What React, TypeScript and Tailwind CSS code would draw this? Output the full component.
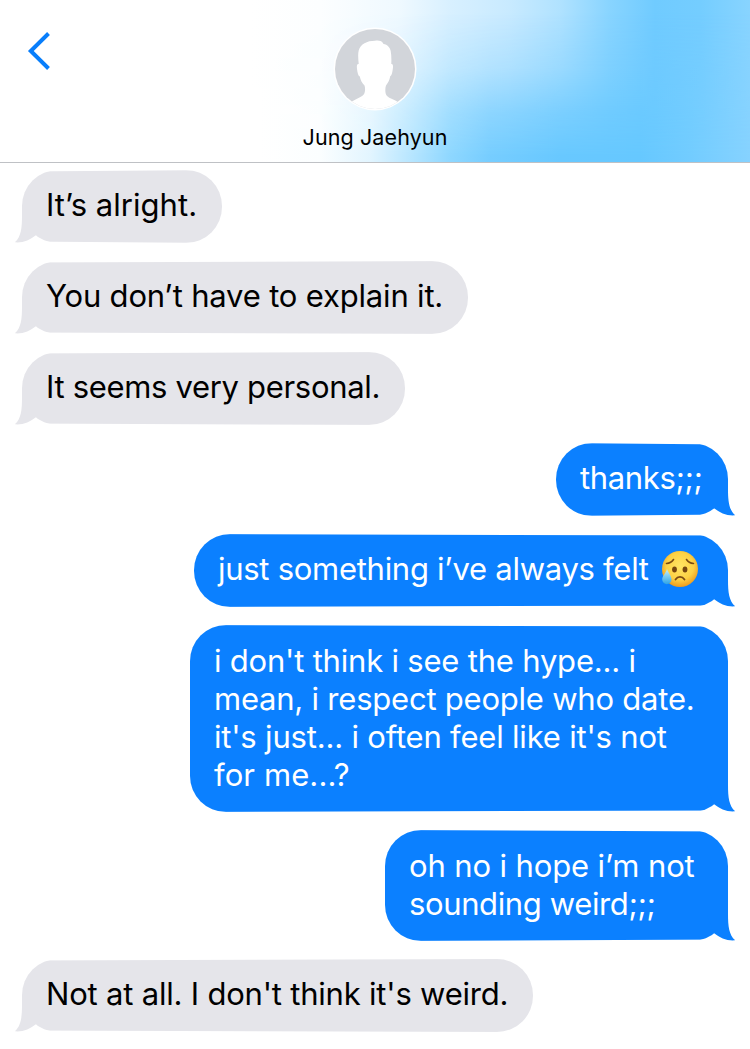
import { clsx } from 'clsx';

type Line = { text: string; tracking: string };

type Message = {
  id: number;
  sent: boolean;
  width: string;
  lines: Line[];
  emoji?: boolean;
};

const messages: Message[] = [
  { id: 1, sent: false, width: 'w-[200px]', lines: [{ text: 'It’s alright.', tracking: 'tracking-[0.03px]' }] },
  { id: 2, sent: false, width: 'w-[446px]', lines: [{ text: 'You don’t have to explain it.', tracking: 'tracking-[-0.18px]' }] },
  { id: 3, sent: false, width: 'w-[383px]', lines: [{ text: 'It seems very personal.', tracking: 'tracking-[-0.32px]' }] },
  { id: 4, sent: true, width: 'w-[172px]', lines: [{ text: 'thanks;;;', tracking: 'tracking-[-0.35px]' }] },
  {
    id: 5,
    sent: true,
    width: 'w-[534px]',
    lines: [{ text: 'just something i’ve always felt', tracking: 'tracking-[-0.28px]' }],
    emoji: true,
  },
  {
    id: 6,
    sent: true,
    width: 'w-[538px]',
    lines: [
      { text: "i don't think i see the hype... i", tracking: 'tracking-[-0.2px]' },
      { text: 'mean, i respect people who date.', tracking: 'tracking-[-0.22px]' },
      { text: "it's just... i often feel like it's not", tracking: 'tracking-[-0.19px]' },
      { text: 'for me...?', tracking: 'tracking-[0.1px]' },
    ],
  },
  {
    id: 7,
    sent: true,
    width: 'w-[343px]',
    lines: [
      { text: 'oh no i hope i’m not', tracking: 'tracking-[-0.12px]' },
      { text: 'sounding weird;;;', tracking: 'tracking-[-0.37px]' },
    ],
  },
  { id: 8, sent: false, width: 'w-[511px]', lines: [{ text: "Not at all. I don't think it's weird.", tracking: 'tracking-[-0.2px]' }] },
];

function BackIcon() {
  return (
    <svg width="24" height="40" viewBox="0 0 24 40" fill="none" className="block">
      <path d="M21.5 2.500 3.800 20l17.700 17.500" stroke="#087efb" strokeWidth="4" />
    </svg>
  );
}

function Avatar() {
  return (
    <svg width="84" height="84" viewBox="0 0 84 84" className="block">
      <defs>
        <clipPath id="avatar-clip">
          <circle cx="42" cy="42" r="40" />
        </clipPath>
      </defs>
      <circle cx="42" cy="42" r="41.5" fill="#fff" />
      <circle cx="42" cy="42" r="40" fill="#d2d5da" />
      <g clipPath="url(#avatar-clip)">
        <path
          fill="#fff"
          d="M42 13.700 C44 13.300 46 13.300 47.500 14 C49 14.700 49.800 15.800 50.500 17 C54.500 17.500 57 20.500 57.700 24 C58.400 28 58.500 32 58.300 37 C60 36.500 60.300 38.500 59.800 42 C59.300 46 58.500 48.800 57.200 49.200 C56.500 53 55.300 55.500 53 58.500 C52.300 60.500 52.200 63 52.500 65.500 C53 69 55 70 58 71.500 C61 73 63.500 73.500 67 76.500 V86 H16 V76.500 C19.500 73.500 22 73 25.500 71 C29 69 31.300 68 31.800 65 C32.200 62.500 32.200 60.500 31.500 58.500 C29 56 27.500 53 26.800 49.500 C25.200 49 24.500 46 24 42 C23.600 38.500 24 36.500 25.700 37 C25.200 32 24.800 27 25.700 23.500 C27.500 17 34 13.700 42 13.700 Z"
        />
      </g>
    </svg>
  );
}

// 😥
function SadFace() {
  return (
    <svg width="38" height="38" viewBox="0 0 38 38" className="ml-[12px] block shrink-0">
      <defs>
        <radialGradient id="face" cx="0.5" cy="0.42" r="0.58">
          <stop offset="0" stopColor="#ffe464" />
          <stop offset="0.65" stopColor="#fdd144" />
          <stop offset="1" stopColor="#ee9b1d" />
        </radialGradient>
        <linearGradient id="tear" x1="0" y1="0" x2="0" y2="1">
          <stop offset="0" stopColor="#c5f0fb" />
          <stop offset="1" stopColor="#2fa4e6" />
        </linearGradient>
      </defs>
      <circle cx="19" cy="19" r="18" fill="url(#face)" />
      <g fill="none" stroke="#7a4a12" strokeLinecap="round" strokeWidth="1.6">
        <path d="M5.500 13.500c3-.3 5.500-1.700 7-4" />
        <path d="M25.500 9.500c1.500 2.300 4 3.700 7 4" />
        <path d="M14.500 29.500c2.300-3.400 6.700-3.400 9 0" strokeWidth="1.800" />
      </g>
      <ellipse cx="13.500" cy="19.500" rx="2.400" ry="2.900" fill="#75450f" />
      <ellipse cx="24" cy="19.500" rx="2.400" ry="2.900" fill="#75450f" />
      <path d="M6 19c1.500 4 4.500 7 4.500 10.500a4.500 4.500 0 0 1-9.300 0C1.200 26 5 23 6 19z" fill="url(#tear)" />
    </svg>
  );
}

function Tail({ sent }: { sent: boolean }) {
  return (
    <svg
      width="36"
      height="36"
      viewBox="0 0 36 36"
      className={clsx(
        'absolute bottom-0',
        sent ? '-right-[8px] -scale-x-100 fill-[#0b80ff]' : '-left-[8px] fill-[#e5e5ea]'
      )}
    >
      <path d="M8 0v9C8 21 7 30 .8 35.300 9 36 16 33 22.200 28L29 10V0z" />
    </svg>
  );
}

function Bubble({ message }: { message: Message }) {
  const { sent, width, lines, emoji } = message;
  return (
    <div
      className={clsx(
        'relative pl-6 text-[31px] leading-[38px] whitespace-nowrap',
        lines.length > 1 ? 'pt-[17px] pb-[18px]' : 'pt-[16px] pb-[19px]',
        width,
        sent ? 'self-end text-white' : 'self-start text-black'
      )}
    >
      {/* the body is slightly narrower on the tail side */}
      <div
        className={clsx(
          'absolute inset-0 rounded-[36px]',
          sent
            ? 'bg-[#0b80ff] [clip-path:polygon(0_0,100%_1.5px,100%_calc(100%-1.5px),0_100%)]'
            : 'bg-[#e5e5ea] [clip-path:polygon(0_1.5px,100%_0,100%_100%,0_calc(100%-1.5px))]'
        )}
      />
      <Tail sent={sent} />
      {lines.map((line) => (
        <p key={line.text} className="relative flex h-[38px] items-center">
          <span className={line.tracking}>{line.text}</span>
          {emoji && <SadFace />}
        </p>
      ))}
    </div>
  );
}

function Header() {
  return (
    <header className="relative flex h-[163px] flex-col items-center border-b border-[#bfc1c5] bg-[linear-gradient(90deg,#fff_250px,#fcfeff_320px,#eff9ff_400px,#d8f0ff_450px,#c8eaff_510px,#b0e2ff_560px,#88d4ff_610px,#70cbff_655px,#74cdff_700px,#88d4ff_750px)]">
      <div className="absolute inset-0 bg-[linear-gradient(90deg,#fff_260px,#fbfeff_320px,#e2f5ff_370px,#b8e6ff_410px,#8ed7ff_450px,#76cdff_490px,#68c8ff_560px,#66c8ff_640px,#72ccff_690px,#86d2ff_750px)] mask-[linear-gradient(180deg,transparent_8%,rgba(0,0,0,0.3)_42%,rgba(0,0,0,0.75)_70%,black_96%)]" />
      <button aria-label="Back" className="absolute left-[27px] top-[31px]">
        <BackIcon />
      </button>
      <div className="relative mt-[27px]">
        <Avatar />
      </div>
      <h1 className="relative mt-[12px] text-[21.5px] leading-[28px] tracking-[0.1px] text-black">Jung Jaehyun</h1>
    </header>
  );
}

export default function App() {
  return (
    <div className="flex h-[1049px] w-[750px] flex-col overflow-hidden bg-white font-['Inter','Liberation_Sans',sans-serif]">
      <Header />
      <main className="flex flex-col gap-[18px] pl-[22px] pr-[22px] pt-[7px]">
        {messages.map((message) => (
          <Bubble key={message.id} message={message} />
        ))}
      </main>
    </div>
  );
}
